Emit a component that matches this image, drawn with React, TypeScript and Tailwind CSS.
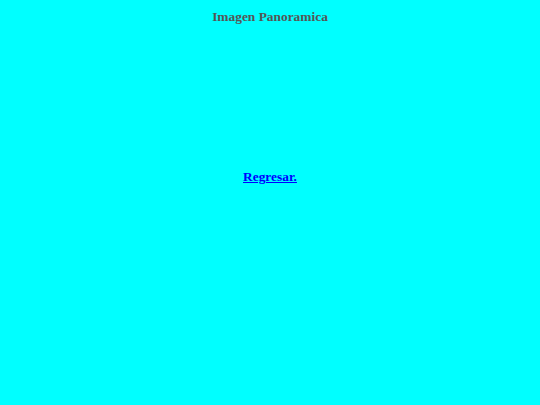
export default function App() {
  return (
    <div className="w-[540px] h-[405px] bg-[#00ffff] flex flex-col items-center" style={{ fontFamily: '"Liberation Serif", serif' }}>
      <div className="mt-[8px] text-[13.4px] font-bold text-[#555555] leading-[18px]">Imagen Panoramica</div>
      <a href="#" className="mt-[142px] text-[13.4px] font-bold text-[#0000ff] underline leading-[18px]">Regresar.</a>
    </div>
  );
}
